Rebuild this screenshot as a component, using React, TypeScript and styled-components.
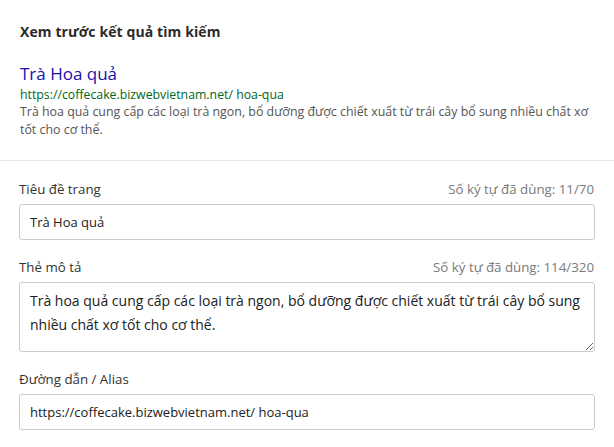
import React from "react";
import styled, { createGlobalStyle } from "styled-components";

const Global = createGlobalStyle`
  html, body { margin: 0; padding: 0; background: #ffffff; }
  body { font-family: "Open Sans", "Noto Sans", Arial, sans-serif; color: #212b35; }
  * { box-sizing: border-box; }
`;

const Panel = styled.div`
  width: 614px;
  background: #fff;
`;

const PreviewSection = styled.section`
  padding: 22px 20px 21px;
  border-bottom: 1px solid #e3e6e8;
`;

const Heading = styled.h2`
  margin: 0 0 20px;
  font-size: 14px;
  line-height: 20px;
  font-weight: 700;
  color: #2b2b2b;
  letter-spacing: 0.1px;
`;

const ResultTitle = styled.div`
  font-size: 17px;
  line-height: 24px;
  color: #1a0dab;
`;

const ResultUrl = styled.div`
  margin-top: 1px;
  font-size: 12.3px;
  line-height: 16px;
  color: #006621;
`;

const ResultDesc = styled.div`
  font-size: 12.4px;
  line-height: 18px;
  color: #545454;
  padding-right: 4px;
`;

const FormSection = styled.section`
  padding: 18px 19px 20px 19px;
  display: flex;
  flex-direction: column;
  gap: 17px;
`;

const Field = styled.div`
  display: flex;
  flex-direction: column;
  gap: 5px;
`;

const LabelRow = styled.div`
  display: flex;
  justify-content: space-between;
  align-items: center;
  font-size: 13.3px;
  line-height: 20px;
`;

const Label = styled.label`
  color: #333;
`;

const Counter = styled.span`
  color: #7a7a7a;
  padding-right: 1px;
`;

const TextInput = styled.input`
  width: 100%;
  height: 36px;
  border: 1px solid #c4cdd5;
  border-radius: 3px;
  padding: 0 10px;
  font-family: inherit;
  font-size: 13px;
  color: #212121;
  outline: none;
  background: #fff;
`;

const TextArea = styled.textarea`
  width: 100%;
  height: 70px;
  border: 1px solid #c4cdd5;
  border-radius: 3px;
  padding: 6px 10px;
  font-family: inherit;
  font-size: 14px;
  line-height: 24px;
  color: #212121;
  outline: none;
  resize: vertical;
  display: block;
`;

export default function App() {
  const desc =
    "Trà hoa quả cung cấp các loại trà ngon, bổ dưỡng được chiết xuất từ trái cây bổ sung nhiều chất xơ tốt cho cơ thể.";
  return (
    <Panel>
      <Global />
      <PreviewSection>
        <Heading>Xem trước kết quả tìm kiếm</Heading>
        <ResultTitle>Trà Hoa quả</ResultTitle>
        <ResultUrl>https://coffecake.bizwebvietnam.net/ hoa-qua</ResultUrl>
        <ResultDesc>{desc}</ResultDesc>
      </PreviewSection>
      <FormSection>
        <Field>
          <LabelRow>
            <Label>Tiêu đề trang</Label>
            <Counter>Số ký tự đã dùng: 11/70</Counter>
          </LabelRow>
          <TextInput defaultValue="Trà Hoa quả" />
        </Field>
        <Field>
          <LabelRow>
            <Label>Thẻ mô tả</Label>
            <Counter>Số ký tự đã dùng: 114/320</Counter>
          </LabelRow>
          <TextArea defaultValue={desc} />
        </Field>
        <Field>
          <LabelRow>
            <Label>Đường dẫn / Alias</Label>
          </LabelRow>
          <TextInput defaultValue="https://coffecake.bizwebvietnam.net/ hoa-qua" />
        </Field>
      </FormSection>
    </Panel>
  );
}
